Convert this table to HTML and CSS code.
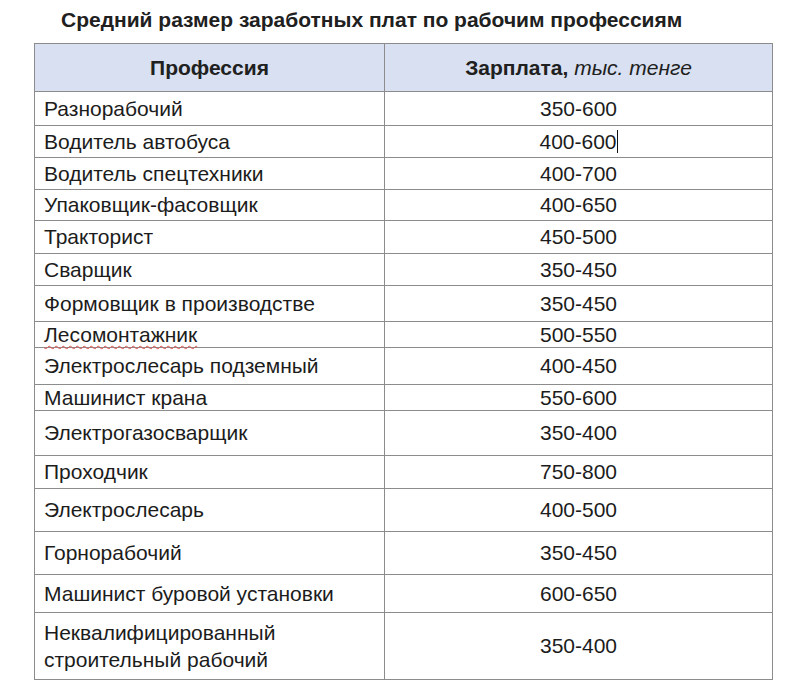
FILE: index.html
```html
<!DOCTYPE html>
<html lang="ru">
<head>
<meta charset="utf-8">
<title>Средний размер заработных плат</title>
<link rel="stylesheet" href="styles.css">
</head>
<body>
<h1 class="title">Средний размер заработных плат по рабочим профессиям</h1>
<table class="salary">
  <colgroup><col class="c-prof"><col class="c-pay"></colgroup>
  <thead>
    <tr class="head"><th>Профессия</th><th>Зарплата, <em>тыс. тенге</em></th></tr>
  </thead>
  <tbody>
    <tr class="r34"><td>Разнорабочий</td><td>350-600</td></tr>
    <tr class="r32"><td>Водитель автобуса</td><td><span class="caret">400-600</span></td></tr>
    <tr class="r32"><td>Водитель спецтехники</td><td>400-700</td></tr>
    <tr class="r31"><td>Упаковщик-фасовщик</td><td>400-650</td></tr>
    <tr class="r33"><td>Тракторист</td><td>450-500</td></tr>
    <tr class="r32"><td>Сварщик</td><td>350-450</td></tr>
    <tr class="r36"><td>Формовщик в производстве</td><td>350-450</td></tr>
    <tr class="r26"><td><span class="spell">Лесомонтажник</span></td><td>500-550</td></tr>
    <tr class="r37"><td>Электрослесарь подземный</td><td>400-450</td></tr>
    <tr class="r26"><td>Машинист крана</td><td>550-600</td></tr>
    <tr class="r45"><td>Электрогазосварщик</td><td>350-400</td></tr>
    <tr class="r33"><td>Проходчик</td><td>750-800</td></tr>
    <tr class="r43"><td>Электрослесарь</td><td>400-500</td></tr>
    <tr class="r43"><td>Горнорабочий</td><td>350-450</td></tr>
    <tr class="r38"><td>Машинист буровой установки</td><td>600-650</td></tr>
    <tr class="r67"><td class="two">Неквалифицированный<br>строительный рабочий</td><td>350-400</td></tr>
  </tbody>
</table>
</body>
</html>
```

FILE: styles.css
```css
html, body {
  margin: 0;
  padding: 0;
  background: #ffffff;
}
body {
  font-family: "Liberation Sans", Arial, sans-serif;
  color: #1c1c1c;
}
.title {
  margin: 8px 0 11px 61px;
  font-size: 21px;
  line-height: 24px;
  font-weight: bold;
  color: #202020;
}
.salary {
  margin-left: 34px;
  border-collapse: collapse;
  table-layout: fixed;
  width: 738px;
  border: 1px solid #a6a6a6;
}
.c-prof { width: 350px; }
.c-pay { width: 388px; }
.salary th,
.salary td {
  border: 1px solid #8c8c8c;
  padding: 0 9px;
  vertical-align: middle;
  font-size: 21px;
  line-height: 22px;
}
.salary td.two {
  line-height: 27px;
}
.salary th {
  background: #d8e0f1;
  font-weight: bold;
  text-align: center;
  color: #202020;
}
.salary th em {
  font-weight: normal;
  font-style: italic;
}
.salary td:nth-child(2) {
  text-align: center;
}
.head { height: 48px; }
.r26 { height: 26px; }
.r31 { height: 31px; }
.r32 { height: 32px; }
.r33 { height: 33px; }
.r34 { height: 34px; }
.r36 { height: 36px; }
.r37 { height: 37px; }
.r38 { height: 38px; }
.r43 { height: 43px; }
.r45 { height: 45px; }
.r67 { height: 67px; }
.spell {
  text-decoration: underline wavy #e0504a;
  text-decoration-thickness: 1px;
  text-underline-offset: 3px;
}
.caret {
  border-right: 1px solid #111;
}
```
